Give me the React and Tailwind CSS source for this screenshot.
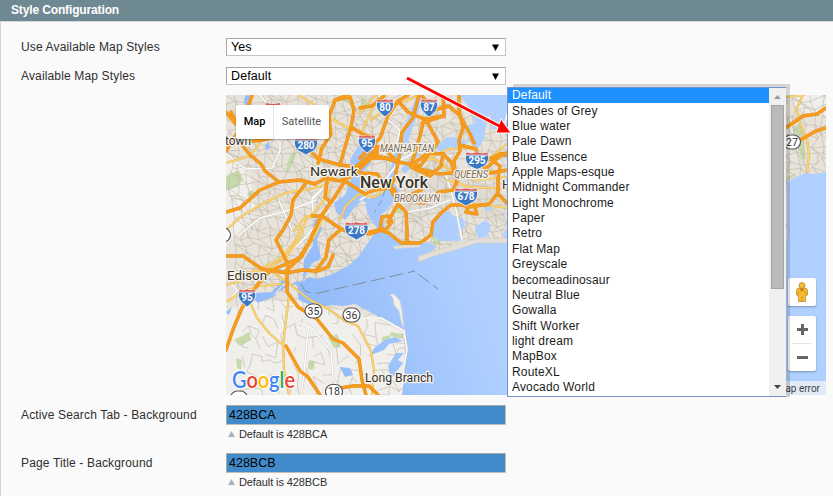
import React from 'react';

const OPTIONS = [
  'Default', 'Shades of Grey', 'Blue water', 'Pale Dawn', 'Blue Essence', 'Apple Maps-esque',
  'Midnight Commander', 'Light Monochrome', 'Paper', 'Retro', 'Flat Map', 'Greyscale',
  'becomeadinosaur', 'Neutral Blue', 'Gowalla', 'Shift Worker', 'light dream', 'MapBox',
  'RouteXL', 'Avocado World',
];

// Irregular mesh of local streets, the same on every render.
function streetMesh() {
  let seed = 11;
  const rnd = () => {
    seed = (seed * 16807) % 2147483647;
    return seed / 2147483647;
  };
  const step = 9;
  const pts = [];
  for (let j = 0; j < 37; j++) {
    const row = [];
    for (let i = 0; i < 68; i++) {
      row.push([222 + i * step + rnd() * 8 + j * 0.5, 90 + j * step + rnd() * 8 - i * 0.2]);
    }
    pts.push(row);
  }
  let d = '';
  for (let j = 0; j < 36; j++) {
    for (let i = 0; i < 67; i++) {
      const a = pts[j][i];
      const seg = (b) => {
        d += `M${a[0].toFixed(1)} ${a[1].toFixed(1)}L${b[0].toFixed(1)} ${b[1].toFixed(1)}`;
      };
      const sparse = j > 21 ? 0.4 : 0.95;
      if (rnd() < sparse) seg(pts[j][i + 1]);
      if (rnd() < sparse) seg(pts[j + 1][i]);
      if (rnd() < sparse - 0.4) seg(pts[j + 1][i + 1]);
    }
  }
  return d;
}
const STREETS = streetMesh();

const HIGHWAYS = [
  // west
  'M226 151L240 129L231 112M240 129L226 112M240 129L252 96',
  'M238 140L250 155L261 164L265 171L279 182L300 180L315 184L326 178L340 181L352 176L367 162L380 150',
  'M226 212L240 208L260 190L279 182',
  'M240 143L262 140L290 133L306 146L318 159L340 165L356 167L370 158L388 158',
  'M306 183L293 200L291 215L283 230L276 240L287 262L288 270',
  'M318 163L322 148L331 134L329 117L335 100L348 95',
  'M335 100L350 97L354 110L351 127L362 134L372 137',
  'M340 165L347 140L351 127M348 176L334 198L321 216L310 240L302 256L285 272',
  'M345 181L365 194L375 190L388 188M356 167L375 150L390 145',
  'M312 216L322 216L341 229L350 233L366 233L383 229',
  'M327 182L325 197L330 202M341 229L329 240L326 257L318 268L316 272',
  'M226 256L243 256L262 269L287 273L302 270L317 271L328 267L333 255',
  'M311 240L299 258L286 264L270 271L258 284L242 308L234 327L226 350',
  'M287 270L287 292L298 307L317 319L333 339L343 343L359 359L362 380L366 395',
  'M286 346L300 371L308 377L320 395M340 388L353 386L369 386L378 395',
  // Manhattan
  'M360 108L372 106L384 96M360 158L380 138L388 116L398 101L408 95',
  'M398 101L408 112L426 120L438 142L421 165',
  'M419 95L413 118L402 132L399 158L395 177L390 188L397 201L421 190',
  'M421 95L434 110L449 106L460 116L470 134L474 143',
  'M459 95L459 110L463 128L459 140L460 151L454 161L455 175',
  'M443 95L444 116L422 123M444 116L424 119L420 136L411 166',
  'M411 166L425 155L430 153L443 154L441 166L430 176L411 167L440 174L462 172L483 171L501 155L508 155',
  'M443 154L451 162L457 181L453 190L439 192L424 203L398 198L394 189',
  'M460 145L476 149L479 163L490 173L508 170M489 158L500 166L498 178L498 193L489 204L469 207L462 205',
  'M488 160L500 154L508 153M460 205L451 205L441 213L433 222L431 235L420 243L401 243L389 233L380 229L382 217L388 216L392 222L384 232',
  'M391 187L398 204L406 212L407 230L407 242M398 204L388 222',
  'M469 205L466 212L477 214L474 205M360 232L370 234L382 230L389 233M499 195L508 204',
  'M360 173L377 174L382 180M374 155L398 162M360 143L383 148L398 162L420 166',
  // eastern strip
  'M787 127L803 116L817 114L826 108M787 141L802 139L816 131L826 128',
];

const MINOR = [
  'M226 230L242 216L264 203L285 193L310 189L326 185L336 174L350 170',
  'M226 285L250 278L270 268L287 256L300 238L306 220L320 206L330 190',
  'M226 302L240 293L260 286L281 284M250 302L257 318L270 334L284 346',
  'M289 395L284 370L283 345L287 312L289 296M270 270L287 282L310 300L330 310L345 321L358 326L371 351L374 370L372 395',
  'M226 277L260 270L282 257L296 240L301 226M298 95L315 105L330 118L352 130',
  'M340 220L346 205L359 194L374 197L388 188M362 131L372 110L378 98',
  'M410 160L435 159L450 170L475 180L508 177M447 180L470 187L508 189M470 203L508 208',
  'M480 165L495 154L508 143M371 120L390 107L420 95M425 160L449 149L475 147',
  'M226 163L250 156L260 143M265 106L300 121L320 150M360 113L376 95',
  'M803 95L796 110L801 126L807 139L809 155L807 172M787 97L804 95',
  'M326 210L318 230L309 245M294 231L306 216L320 216',
];

const WHITE_ROADS = [
  'M226 154L246 169L272 168L280 151L280 143L270 133M238 236L260 218L290 210L316 200',
  'M279 201L292 230M313 214L312 198L323 188L313 199M270 270L300 243L330 210',
  'M285 310L300 323L313 329L331 351L333 378L340 390M309 325L306 350L304 375L301 395',
  'M360 200L380 187L400 160L420 150M407 212L430 208L450 200M445 172L455 205L462 240',
  'M226 305L237 290L230 283M237 290L252 300L260 280M355 318L381 318L404 331',
  'M403 95L388 120L400 130L396 146M260 95L280 120L290 132',
  'M490 120L503 132L508 110M404 331L407 350L403 370',
];

const WATER = [
  // lower bay and the ocean
  'M370 240L358 257L347 267L330 275L317 279L309 277L303 282L297 289L299 300L317 308L331 305L343 306L355 304L370 312L388 322L404 330L405 340L406 360L404 378L402 395H826V172L814 174L806 173L798 176L787 182V241H508L490 242L477 242L450 250L430 257L418 262L419 256L430 252L437 247L430 243L410 243L394 239L386 232L381 215L387 210L395 199L400 190L393 183L395 169L405 150L412 130L424 95H417L404 128L398 140L390 170L386 190L374 195L365 205L369 217L377 228Z',
  // Newark bay
  'M366 140L357 148L350 160L353 175L345 195L334 203L336 212L345 220L356 206L363 200L371 208L376 199L365 198L360 190L361 174L371 163L372 150Z',
  // Kill and river
  'M316 218L322 229L317 239L321 259L312 263L305 276L301 290L295 284L283 286L275 296L258 303L251 295L257 293L272 292L284 278L286 281L272 296L295 282L303 281L304 260L313 245L312 229Z',
  // East River and the Sound
  'M438 145L447 137L459 138L466 141L471 134L466 125L475 124L472 112L461 97L462 95H508V126L492 130L489 120L494 110L487 119L484 139L479 147L474 152L472 136L465 144L460 151L451 147L441 152L433 148L421 151L412 166L405 174L401 169L413 155L422 147Z',
  // Jamaica bay
  'M437 216L448 211L455 217L466 226L458 234L463 241H440L432 235Z M475 227L486 220L491 226L487 237L478 238Z M484 208L493 207L489 212Z M450 218L459 216L467 223L456 226Z',
  // inlets
  'M245 96L252 95L247 108L244 101Z M265 145L269 142L270 148L266 150Z M374 348L385 340L395 337L403 341L389 344L384 350L371 355Z M388 366L396 353L404 353L398 360L403 363L397 371L391 380Z M340 367L350 368L353 375L345 377Z M226 312L232 307L229 315Z',
  'M508 227L503 234L505 240H508Z M500 118L508 108V124L498 133Z',
];

const PARKS = [
  'M226 176L239 170L243 180L237 187L226 191Z', 'M286 169L291 153L297 151L292 166L287 174Z',
  'M234 340L249 332L251 340L240 346Z', 'M236 358L242 360L241 370L237 368Z', 'M328 338L337 334L341 347L334 348Z',
  'M308 362L315 361L313 370L308 369Z', 'M382 337L391 335L390 343H382Z', 'M390 332L404 334L402 339L391 336Z',
  'M397 206L401 204L402 214L396 213Z', 'M432 236L438 234L441 244L434 246Z', 'M485 169L493 168L492 172L485 173Z',
  'M794 126L801 124L804 142L806 158L802 160L798 148L793 141Z', 'M787 177L796 173L794 177L787 181Z',
  'M342 95L350 95L348 103L342 100Z', 'M250 190L260 194L252 199L247 195Z', 'M363 96L368 103L365 111L360 107Z',
];

function Interstate({ x, y, n, wide }) {
  const w = wide ? 11.5 : 8.5;
  return (
    <g transform={`translate(${x} ${y})`}>
      <path d={`M${-w} -5Q${-w - 1} 2 ${-w + 4} 6Q-3 8 0 10Q3 8 ${w - 4} 6Q${w + 1} 2 ${w} -5Z`} fill="#3b78c3" stroke="#fff" strokeWidth=".8" />
      <path d={`M${-w + 1} -8Q${-w / 2} -6 0 -8Q${w / 2} -6 ${w - 1} -8L${w} -5H${-w}Z`} fill="#d9605a" stroke="#fff" strokeWidth=".5" />
      <text y="4.3" textAnchor="middle" fontSize="10" fontWeight="700" fill="#fff">{n}</text>
    </g>
  );
}

function Route({ x, y, n }) {
  return (
    <g transform={`translate(${x} ${y})`}>
      <rect x="-8.5" y="-7" width="17" height="14" rx="7" fill="#fff" stroke="#555" strokeWidth="1.2" />
      {n && <text y="3.7" textAnchor="middle" fontSize="10.5" fill="#333">{n}</text>}
    </g>
  );
}

function Place({ x, y, size, children, color = '#35322d', italic, weight = 400, width }) {
  return (
    <text x={x} y={y} fontSize={size} fill={color} fontWeight={weight} fontStyle={italic ? 'italic' : 'normal'}
      textLength={width} lengthAdjust="spacingAndGlyphs" stroke="#f7f4ee" strokeWidth="2.5" strokeLinejoin="round" paintOrder="stroke">{children}</text>
  );
}

function MapDrawing() {
  return (
    <svg viewBox="226 95 600 300" className="block h-[300px] w-[600px] font-[Roboto,sans-serif]">
      <defs>
        <linearGradient id="sea" gradientUnits="userSpaceOnUse" x1="330" y1="340" x2="480" y2="290">
          <stop offset="0" stopColor="#94bcfa" />
          <stop offset="1" stopColor="#b0d0ff" />
        </linearGradient>
      </defs>
      <rect x="226" y="95" width="600" height="300" fill="#e8e3da" />
      <path d="M226 310L250 302L290 300L330 309L370 316L404 332L404 395H226Z" fill="#f1efeb" />
      <path d="M226 150L250 175L255 215L226 245Z M787 95H826V118L800 110Z" fill="#f1efeb" />
      <path d="M415 168L447 161L500 190L505 225L440 205L413 226L400 205Z" fill="#ddd8d0" opacity=".7" />
      {PARKS.map((d) => <path key={d} d={d} fill="#c5dbac" />)}
      <path d={STREETS} fill="none" stroke="#c0b8aa" strokeWidth=".75" opacity=".85" />
      {WATER.map((d) => <path key={d} d={d} fill="url(#sea)" />)}
      <path d="M390 295L394 294L400 301L402 310L404 329L401 321L399 311L394 305L393 298Z" fill="#f0eeea" stroke="#d5d1c8" strokeWidth=".6" />
      <path d="M418 257L431 252L454 245L475 239L508 238L508 243L477 243L452 251L431 257L419 262Z" fill="#e5e0d7" stroke="#cbc5ba" strokeWidth=".5" />
      <path d="M393 246L420 244L420 247L395 249Z" fill="#e2dcd1" />
      <g fill="none" strokeLinejoin="round" strokeLinecap="round">
        {WHITE_ROADS.map((d) => <path key={d} d={d} stroke="#c9c4ba" strokeWidth="2.2" />)}
        {WHITE_ROADS.map((d) => <path key={d} d={d} stroke="#fff" strokeWidth="1.5" />)}
        {MINOR.map((d) => <path key={d} d={d} stroke="#dcae55" strokeWidth="2.2" />)}
        {MINOR.map((d) => <path key={d} d={d} stroke="#fcd670" strokeWidth="1.5" />)}
        {HIGHWAYS.map((d) => <path key={d} d={d} stroke="#e38c16" strokeWidth="3.4" />)}
        {HIGHWAYS.map((d) => <path key={d} d={d} stroke="#f79c1c" strokeWidth="2.6" />)}
      </g>
      <path d="M301 284L305 291L314 294L415 271M418 274L438 289" fill="none" stroke="#7f8d9f" strokeWidth="1" strokeDasharray="14 5" />
      <path d="M385 190L382 200L374 213" fill="none" stroke="#7f8d9f" strokeWidth=".8" strokeDasharray="7 4" />

      <Interstate x={306} y={145} n="280" wide />
      <Interstate x={367} y={143} n="95" />
      <Interstate x={385} y={107} n="80" />
      <Interstate x={429} y={107} n="87" />
      <Interstate x={477} y={160} n="295" wide />
      <Interstate x={466} y={196} n="678" wide />
      <Interstate x={356.5} y={230} n="278" wide />
      <Interstate x={247} y={297} n="95" />
      <path d="M266 103Q273 105 280 103L281 110H265Z" fill="#d9605a" />
      <Route x={313.5} y={311} n="35" />
      <Route x={351.5} y={315} n="36" />
      <Route x={334} y={391.5} n="18" />
      <Route x={792} y={142} n="27" />
      <Route x={222} y={235} />
      <Route x={239} y={398} />

      <Place x={225} y={145} size={12} width={26}>town</Place>
      <Place x={310} y={175.5} size={13} width={48}>Newark</Place>
      <Place x={360} y={187.5} size={16} width={68} weight={500}>New York</Place>
      <Place x={380} y={152} size={10} width={54} italic color="#766957">MANHATTAN</Place>
      <Place x={454} y={177.5} size={10} width={34} italic color="#766957">QUEENS</Place>
      <Place x={394} y={201.5} size={10} width={46} italic color="#766957">BROOKLYN</Place>
      <Place x={502} y={189} size={13}>H</Place>
      <Place x={227} y={279.5} size={13} width={40}>Edison</Place>
      <Place x={365} y={381.5} size={12.5} width={68}>Long Branch</Place>

      <text x="232" y="388" textLength="63" lengthAdjust="spacingAndGlyphs" fontFamily="Lato" fontSize="23" fontWeight="600" stroke="#fff" strokeWidth="2" paintOrder="stroke">
        <tspan fill="#4285f4">G</tspan><tspan fill="#ea4335">o</tspan><tspan fill="#fbbc05">o</tspan><tspan fill="#4285f4">g</tspan><tspan fill="#34a853">l</tspan><tspan fill="#ea4335">e</tspan>
      </text>
    </svg>
  );
}

function MapControls() {
  return (
    <>
      <div className="absolute left-[10px] top-[10px] flex h-[34px] w-[93px] items-center rounded-[2px] bg-white font-[Roboto,sans-serif] text-[11px] shadow-[0_1px_2px_rgba(0,0,0,0.3)]">
        <span className="flex h-full w-[38px] items-center justify-center border-r border-[#e4e4e4] font-medium text-black">Map</span>
        <span className="flex-1 text-center text-[#565656]">Satellite</span>
      </div>
      <div className="absolute left-[562px] top-[183px] flex h-7 w-7 items-center justify-center rounded-[2px] bg-white shadow-[0_1px_2px_rgba(0,0,0,0.3)]">
        <svg viewBox="0 0 14 20" className="h-5 w-[14px]">
          <path d="M4.5 6Q1.5 6 1.5 8.5V13L3.5 14.5V19.5H10.5V14.5L12.5 13V8.5Q12.5 6 9.5 6Z" fill="#fbbc2c" stroke="#a87f31" strokeWidth=".7" />
          <circle cx="7" cy="3.5" r="3" fill="#fbbc2c" stroke="#a87f31" strokeWidth=".7" />
          <path d="M4.5 7H9.5L7 10ZM6.700 14H7.3V19.5H6.700ZM3.5 9H4V14H3.5ZM10 9H10.5V14H10Z" fill="#ce762a" />
        </svg>
      </div>
      <div className="absolute left-[562px] top-[221px] flex h-[55px] w-7 flex-col items-center rounded-[2px] bg-white shadow-[0_1px_2px_rgba(0,0,0,0.3)]">
        <svg viewBox="0 0 28 55" className="h-[55px] w-7">
          <path d="M9 13.5H20M14.5 8V19M9 41.5H20" stroke="#666" strokeWidth="3" />
          <path d="M4 27.5H23" stroke="#e4e4e4" />
        </svg>
      </div>
      <div className="absolute bottom-0 right-0 flex h-[14px] w-[120px] items-center justify-end bg-[#e1eaf7] pr-[6px] font-[Roboto,sans-serif] text-[10px] text-[#444]">
        Report a map error
      </div>
    </>
  );
}

function SelectBox({ value }) {
  return (
    <div className="flex h-[18px] w-[280px] items-center justify-between border border-[#a6a6a6] border-b-[#c4c4c4] border-r-[#c4c4c4] bg-white pl-1 pr-[6px] text-[12.5px] tracking-[0.1px] text-black">
      <span>{value}</span>
      <svg viewBox="0 0 7 7" className="h-[7px] w-[7px]"><path d="M0 .5H7L3.5 7Z" /></svg>
    </div>
  );
}

function ColorField({ label, value }) {
  return (
    <div className="flex h-12">
      <div className="w-[205px] pt-[2px] leading-4 tracking-[0.15px]">{label}</div>
      <div>
        <div className="flex h-5 w-[280px] items-center border border-[#a9a9a9] border-b-[#c4bdb4] border-r-[#c4bdb4] bg-[#428bca] pl-[2px] text-[12.5px] text-black">{value}</div>
        <div className="flex items-center gap-1 pl-[2px] pt-[2px] text-[11px] leading-[14px] tracking-[-0.1px] text-[#2f2f2f]">
          <svg viewBox="0 0 7 6" className="h-[6px] w-[7px]"><path d="M3.5 0L7 6H0Z" fill="#a3b7bd" /></svg>
          Default is {value}
        </div>
      </div>
    </div>
  );
}

function OptionList() {
  return (
    <div className="absolute left-[507px] top-[87px] h-[310px] w-[279px]">
      <div className="absolute -top-[3px] left-[6px] h-[313px] w-[277px] bg-black/15" />
      <div className="relative flex h-full border border-r-0 border-[#6f94cd] bg-white">
        <ul className="flex-1 text-[12px] tracking-[0.16px] text-[#1c1c1c]">
          {OPTIONS.map((name, i) => (
            <li key={name} className={`flex h-[15.36px] items-center whitespace-nowrap pb-px pl-1 ${i === 0 ? 'bg-[#1e90ff] text-white' : ''}`}>
              {name}
            </li>
          ))}
        </ul>
        <div className="flex w-[17px] flex-col items-center justify-between bg-[#f0f0f0]">
          <svg viewBox="0 0 17 17" className="h-[17px] w-[17px]"><path d="M5 11L8.5 7L12 11Z" fill="#999" /></svg>
          <div className="h-[184px] w-[13px] border border-[#a5a5a5] bg-[#bababa]" />
          <div className="flex-1" />
          <svg viewBox="0 0 17 17" className="h-[17px] w-[17px]"><path d="M5 6L8.5 10L12 6Z" fill="#444" /></svg>
        </div>
      </div>
    </div>
  );
}

export default function App() {
  return (
    <div className="relative h-[496px] w-[833px] overflow-hidden bg-[#fafafa] font-['Liberation_Sans',Arial,sans-serif] text-[12px] text-[#2f2f2f]">
      <header className="flex h-[21px] items-center bg-[#6f8992] pb-px pl-[11px] text-[12px] font-bold tracking-[-0.14px] text-white">Style Configuration</header>
      <main className="h-[475px] border-l border-t border-[#d6d6d6] pl-5 pt-4">
        <div className="flex h-[29px]">
          <div className="w-[205px] pt-px leading-4 tracking-[0.15px]">Use Available Map Styles</div>
          <SelectBox value="Yes" />
        </div>
        <div className="flex h-7">
          <div className="w-[205px] pt-px leading-4 tracking-[0.15px]">Available Map Styles</div>
          <SelectBox value="Default" />
        </div>
        <div className="relative ml-[205px] h-[300px] w-[600px] overflow-hidden">
          <MapDrawing />
          <MapControls />
        </div>
        <div className="pt-[10px]">
          <ColorField label="Active Search Tab - Background" value="428BCA" />
          <ColorField label="Page Title - Background" value="428BCB" />
        </div>
      </main>
      <OptionList />
      <svg viewBox="0 0 120 70" className="absolute left-[400px] top-[70px] h-[70px] w-[120px]">
        <path d="M7 8L103 58" stroke="#fff" strokeWidth="5" opacity=".7" />
        <path d="M96 63L111 63L101 49Z" fill="#f00" stroke="#fff" strokeWidth="1" />
        <path d="M7 8L103 58" stroke="#f00" strokeWidth="2.8" />
      </svg>
    </div>
  );
}
